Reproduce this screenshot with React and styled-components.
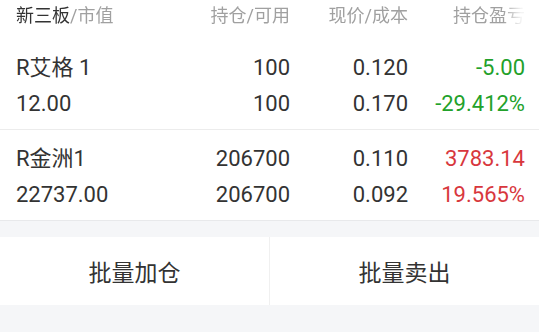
import React from 'react'
import styled, { createGlobalStyle } from 'styled-components'

const GlobalStyle = createGlobalStyle`
  html, body {
    margin: 0;
    padding: 0;
    background: #f5f6f8;
  }
  body {
    font-family: Roboto, "Noto Sans CJK SC", sans-serif;
    color: #333;
  }
`

const positions = [
  { name: 'R艾格 1', value: '12.00', hold: '100', avail: '100', price: '0.120', cost: '0.170', pl: '-5.00', rate: '-29.412%', up: false },
  { name: 'R金洲1', value: '22737.00', hold: '206700', avail: '206700', price: '0.110', cost: '0.092', pl: '3783.14', rate: '19.565%', up: true },
]

function App() {
  return (
    <>
      <GlobalStyle />
      <Page>
        <List>
          <Header>
            <Cell><strong>新三板</strong>/市值</Cell>
            <Cell $right>持仓/可用</Cell>
            <Cell $right>现价/成本</Cell>
            <Cell $right>持仓盈亏</Cell>
          </Header>
          {positions.map((p) => (
            <Row key={p.name}>
              <Cell>{p.name}<br />{p.value}</Cell>
              <Cell $right>{p.hold}<br />{p.avail}</Cell>
              <Cell $right>{p.price}<br />{p.cost}</Cell>
              <Cell $right $color={p.up ? '#d8373d' : '#22a12a'}>{p.pl}<br />{p.rate}</Cell>
            </Row>
          ))}
        </List>
        <Actions>
          <ActionButton>批量加仓</ActionButton>
          <ActionButton>批量卖出</ActionButton>
        </Actions>
      </Page>
    </>
  )
}

export default App

const Page = styled.div`
  width: 539px;
  height: 332px;
  overflow: hidden;
`

const List = styled.div`
  background: #fff;
  margin-bottom: 16px;
`

const Grid = styled.div`
  display: grid;
  grid-template-columns: 1fr 120px 118px 117px;
  padding: 0 14px 0 16px;
`

const Header = styled(Grid)`
  height: 39px;
  padding-top: 4px;
  box-sizing: border-box;
  font-size: 18px;
  line-height: 24px;
  color: #a0a0a0;
  -webkit-mask-image: linear-gradient(90deg, #000 503px, rgba(0, 0, 0, 0.12) 521px);
  mask-image: linear-gradient(90deg, #000 503px, rgba(0, 0, 0, 0.12) 521px);
  strong {
    font-weight: 400;
    color: #333;
  }
`

const Row = styled(Grid)`
  padding-top: 11px;
  padding-bottom: 7px;
  font-size: 22px;
  line-height: 36px;
  border-bottom: 1px solid #ececec;
  &:last-child {
    border-bottom: 1px solid #e8e9eb;
  }
`

const Cell = styled.div`
  text-align: ${(p) => (p.$right ? 'right' : 'left')};
  color: ${(p) => p.$color || 'inherit'};
  white-space: nowrap;
`

const Actions = styled.div`
  display: grid;
  grid-template-columns: 269px 1fr;
  height: 68px;
  background: #fff;
`

const ActionButton = styled.button`
  border: 0;
  background: #fff;
  font-family: "Noto Sans CJK SC", sans-serif;
  font-size: 23px;
  color: #333;
  padding: 0;
  & + & {
    border-left: 1px solid #f0f0f0;
  }
`
